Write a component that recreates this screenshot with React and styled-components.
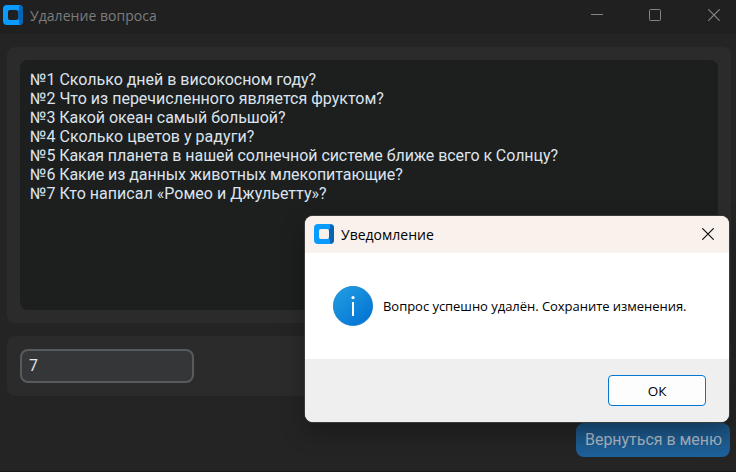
import React from "react";
import styled, { createGlobalStyle } from "styled-components";

const Global = createGlobalStyle`
  * { box-sizing: border-box; }
  html, body { margin: 0; padding: 0; background: #242424; overflow: hidden; }
`;

const Window = styled.div`
  position: relative;
  width: 736px;
  height: 472px;
  display: flex;
  flex-direction: column;
  overflow: hidden;
  background: #242424;
  border-bottom: 1px solid #1b171a;
  font-family: Roboto, sans-serif;
`;

const TitleBar = styled.header`
  flex: none;
  display: flex;
  align-items: center;
  height: 34px;
  padding: 0 16px 4px 3px;
  background: #202020;
`;

const Title = styled.span`
  flex: 1;
  margin-left: 7px;
  padding-top: 2px;
  color: #7c7c7c;
  font: 14px/20px "Open Sans", sans-serif;
  letter-spacing: 0.04px;
  white-space: nowrap;
`;

const WindowControls = styled.div`
  display: grid;
  grid-template-columns: 58px 59px 12px;
`;

const Content = styled.main`
  display: flex;
  flex-direction: column;
  gap: 13px;
  padding: 13px 5px 0 7px;
`;

const Panel = styled.section`
  height: ${(p) => p.$height}px;
  padding: 13px;
  border-radius: 8px;
  background: #2b2b2b;
`;

const QuestionList = styled.ul`
  height: 250px;
  margin: 0;
  padding: 10px;
  list-style: none;
  border-radius: 8px;
  background: #1d1e1e;
`;

const Question = styled.li`
  height: 19px;
  color: #dce4ee;
  font-size: 16px;
  line-height: 19px;
  letter-spacing: ${(p) => p.$tracking}px;
  white-space: nowrap;
`;

const NumberField = styled.div`
  width: 174px;
  height: 34px;
  padding: 0 7px;
  border: 2px solid #565b5e;
  border-radius: 8px;
  background: #343638;
  color: #dce4ee;
  font-size: 16px;
  line-height: 30px;
`;

const Footer = styled.footer`
  display: flex;
  justify-content: flex-end;
  padding: 27px 6px 0;
`;

const MenuButton = styled.button`
  width: 154px;
  height: 34px;
  padding: 0 0 0 1px;
  border: 0;
  border-radius: 8px;
  background: linear-gradient(#1b5180, #1e619a);
  color: #a9b4c0;
  font: 16px/34px Roboto, sans-serif;
  letter-spacing: -0.03px;
  white-space: nowrap;
`;

const Dialog = styled.div`
  position: absolute;
  left: 305px;
  top: 216px;
  width: 424px;
  height: 206px;
  display: flex;
  flex-direction: column;
  overflow: hidden;
  border-radius: 8px;
  background: #fff;
`;

const DialogShadow = styled.div`
  position: absolute;
  left: 305px;
  top: 216px;
  width: 424px;
  height: 206px;
  border-radius: 8px;
  box-shadow: 0 0 0 1px #3b3b3b, 0 10px 24px rgba(0, 0, 0, 0.3);
`;

const DialogHeader = styled.div`
  flex: none;
  display: flex;
  align-items: center;
  height: 37px;
  padding: 0 15px 1px 9px;
  background: #f9f1ec;
`;

const DialogTitle = styled.span`
  flex: 1;
  margin-left: 7px;
  padding-top: 2px;
  color: #000;
  font: 14px/20px "Open Sans", sans-serif;
  white-space: nowrap;
`;

const DialogBody = styled.div`
  flex: 1;
  display: flex;
  align-items: center;
  gap: 10px;
  padding-left: 28px;
`;

const Message = styled.span`
  color: #000;
  font: 13px/20px "Open Sans", sans-serif;
  letter-spacing: -0.035px;
  white-space: nowrap;
`;

const DialogFooter = styled.div`
  flex: none;
  display: flex;
  justify-content: flex-end;
  height: 63px;
  padding: 16px 23px 0 0;
  background: #efefef;
`;

const OkButton = styled.button`
  width: 98px;
  height: 31px;
  padding: 1px 0 0;
  border: 1px solid #0078d4;
  border-radius: 4px;
  background: #fdfdfd;
  color: #000;
  font: 13.5px/28px "Open Sans", sans-serif;
`;

function Logo() {
  return (
    <svg width="20" height="20" viewBox="0 0 20 20">
      <path d="M4 0H16Q20 0 20 4V16Q20 20 16 20H4Q0 20 0 16V4Q0 0 4 0ZM7 5Q5 5 5 7V13Q5 15 7 15H13Q15 15 15 13V7Q15 5 13 5Z" fill="#0a9bff" fillRule="evenodd" />
      <path d="M17 0.2Q20 1 20 4V16Q20 19 17 19.8Q16 19.2 16 18V16L15 14V6L16 4V2Q16 0.8 17 0.2Z" fill="#0664b4" />
    </svg>
  );
}

function CloseIcon({ color }) {
  return (
    <svg width="12" height="12" viewBox="0 0 12 12">
      <path d="M0.3 0.3L11.7 11.7M11.7 0.3L0.3 11.7" stroke={color} strokeWidth="1.2" />
    </svg>
  );
}

function InfoIcon() {
  return (
    <svg width="40" height="40" viewBox="0 0 40 40">
      <defs>
        <linearGradient id="info" x1="0.15" y1="0.1" x2="0.85" y2="0.9">
          <stop offset="0" stopColor="#1f9ae0" />
          <stop offset="1" stopColor="#0475d4" />
        </linearGradient>
      </defs>
      <circle cx="20" cy="20" r="19.6" fill="url(#info)" stroke="#0f78c8" strokeWidth="0.8" />
      <circle cx="20" cy="11.6" r="1.6" fill="#fff" />
      <rect x="19" y="16" width="2" height="14" fill="#fff" />
    </svg>
  );
}

const questions = [
  { text: "Сколько дней в високосном году?", tracking: -0.01 },
  { text: "Что из перечисленного является фруктом?", tracking: 0 },
  { text: "Какой океан самый большой?", tracking: -0.03 },
  { text: "Сколько цветов у радуги?", tracking: 0.03 },
  { text: "Какая планета в нашей солнечной системе ближе всего к Солнцу?", tracking: -0.07 },
  { text: "Какие из данных животных млекопитающие?", tracking: -0.07 },
  { text: "Кто написал «Ромео и Джульетту»?", tracking: 0.03 },
];

export default function App() {
  return (
    <>
      <Global />
      <Window>
        <TitleBar>
          <Logo />
          <Title>Удаление вопроса</Title>
          <WindowControls>
            <svg width="12" height="12" viewBox="0 0 12 12">
              <path d="M0 5.5H12" stroke="#858585" />
            </svg>
            <svg width="12" height="12" viewBox="0 0 12 12">
              <rect x="0.5" y="0.5" width="11" height="11" rx="1" fill="none" stroke="#858585" />
            </svg>
            <CloseIcon color="#858585" />
          </WindowControls>
        </TitleBar>
        <Content>
          <Panel $height={276}>
            <QuestionList>
              {questions.map((q, i) => (
                <Question key={q.text} $tracking={q.tracking}>{`№${i + 1} ${q.text}`}</Question>
              ))}
            </QuestionList>
          </Panel>
          <Panel $height={60}>
            <NumberField>7</NumberField>
          </Panel>
        </Content>
        <DialogShadow />
        <Footer>
          <MenuButton>Вернуться в меню</MenuButton>
        </Footer>
        <Dialog>
          <DialogHeader>
            <Logo />
            <DialogTitle>Уведомление</DialogTitle>
            <CloseIcon color="#111" />
          </DialogHeader>
          <DialogBody>
            <InfoIcon />
            <Message>Вопрос успешно удалён. Сохраните изменения.</Message>
          </DialogBody>
          <DialogFooter>
            <OkButton>ОК</OkButton>
          </DialogFooter>
        </Dialog>
      </Window>
    </>
  );
}
